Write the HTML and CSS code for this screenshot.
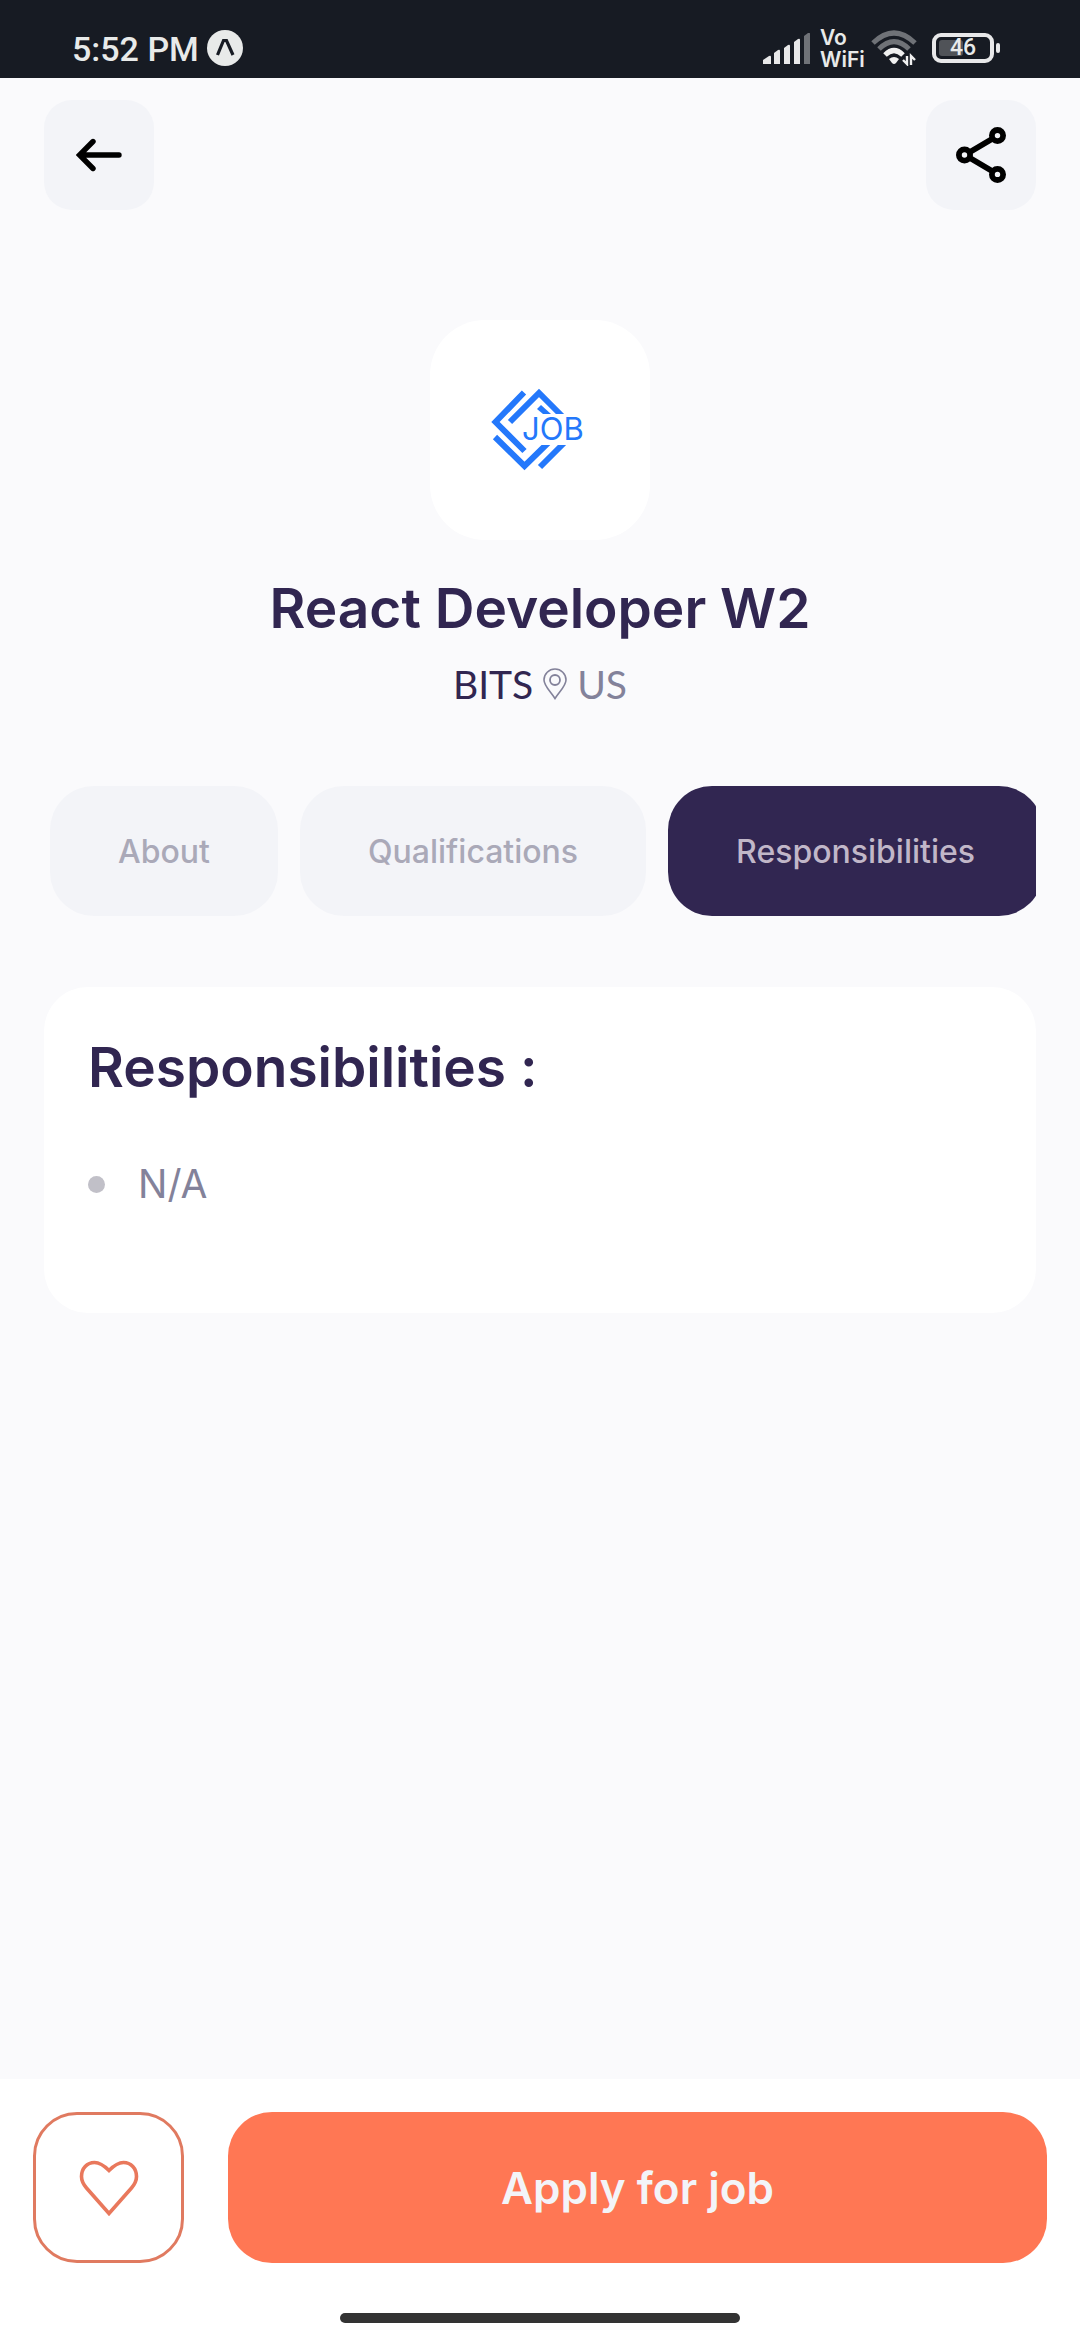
FILE: index.html
```html
<!DOCTYPE html>
<html lang="en">
<head>
<meta charset="utf-8">
<meta name="viewport" content="width=device-width, initial-scale=1">
<title>React Developer W2</title>
<link rel="stylesheet" href="styles.css">
</head>
<body>
<div class="screen">
  <div class="status-bar">
    <div class="status-left">
      <span class="clock">5:52 PM</span>
      <svg class="app-badge" viewBox="0 0 36 36" aria-hidden="true">
        <circle cx="18" cy="18" r="18" fill="#e8eae9"/>
        <path d="M10.500 25 16.500 10.500h3L26 25" fill="none" stroke="#171b23" stroke-width="3.200"/>
      </svg>
    </div>
    <div class="status-right">
      <svg class="signal" viewBox="0 0 48 31" aria-hidden="true">
        <g fill="#e8e8e9">
          <path d="M0 31v-4l6-4q2-1 2 1v7z"/>
          <path d="M11 31V20l4-3q2-1 2 1v13z"/>
          <path d="M21 31V15l4-3q2-1 2 1v18z"/>
          <path d="M31 31V9l4-3q2-1 2 1v24z"/>
        </g>
        <path d="M41 31V3l4-3q2-1 2 1v30z" fill="#6f7277"/>
      </svg>
      <div class="carrier"><span>Vo</span><span>WiFi</span></div>
      <svg class="wifi" viewBox="0 0 46 36" aria-hidden="true">
        <g fill="none" stroke-width="5">
          <path d="M2 13Q23-7 44 13" stroke="#6f7277"/>
          <path d="M8 19Q23 4 38 19" stroke="#6f7277"/>
          <path d="M14 25Q23 16 32 25" stroke="#f0f0f0"/>
        </g>
        <path d="M18 29q5-4 10 0l-3 4q-2 2-4 0z" fill="#f0f0f0"/>
        <path d="M32 30l4 4V26M44 30l-4-4v9" fill="none" stroke="#f0f0f0" stroke-width="2.400"/>
      </svg>
      <div class="battery">
        <div class="battery-body"><span class="battery-level"></span><span class="battery-text">46</span></div>
        <span class="battery-tip"></span>
      </div>
    </div>
  </div>

  <header class="top-bar">
    <button class="icon-button" type="button" aria-label="Back">
      <svg class="back-icon" viewBox="0 0 46 34" fill="none" stroke="#000" stroke-width="5.400" stroke-linecap="round" aria-hidden="true">
        <path d="M43 17H4M17 3.500 3.500 17 17 30.500"/><path d="M4 17l6-5v10z" fill="#000" stroke="none"/>
      </svg>
    </button>
    <button class="icon-button" type="button" aria-label="Share">
      <svg class="share-icon" viewBox="0 0 50 56" fill="none" stroke="#000" aria-hidden="true">
        <path d="M14 25 36 12M14 31 36 44" stroke-width="5.600"/>
        <g stroke-width="5.800"><circle cx="8.500" cy="28" r="5.600"/><circle cx="41.500" cy="8.600" r="5.600"/><circle cx="41.500" cy="47.400" r="5.600"/></g>
      </svg>
    </button>
  </header>

  <main class="content">
    <section class="company">
      <div class="logo-box">
        <svg class="logo" viewBox="0 0 98 84" role="img" aria-label="JOB">
          <g fill="none" stroke="#2478fb" stroke-width="6">
            <path d="M33 4.500 4.500 34 33.500 63"/>
            <path d="M19 34 48 5 71 28"/>
            <path d="M4 49 33.500 78 59 53"/>
            <path d="M49 79 74 54"/>
          </g>
          <path d="M46 21 50 17 60 26H52z" fill="#2478fb"/>
          <path d="M62 26H76V31H62zM46 51H76V57H46z" fill="#fff"/>
          <text class="logo-text" x="31" y="52">JOB</text>
        </svg>
      </div>
      <h1 class="job-title">React Developer W2</h1>
      <p class="company-line">
        <span class="company-name">BITS</span>
        <svg class="pin" viewBox="0 0 24 32" fill="none" stroke="#83829a" aria-hidden="true">
          <path d="M12 30.500C8 24 1 18 1 12a11 11 0 0 1 22 0c0 6-7 12-11 18.500z" stroke-width="1.600"/>
          <circle cx="12" cy="12" r="5" stroke-width="1.800"/>
        </svg>
        <span class="location">US</span>
      </p>
    </section>

    <nav class="tabs" aria-label="Job details">
      <button class="tab" type="button">About</button>
      <button class="tab" type="button">Qualifications</button>
      <button class="tab tab-active" type="button">Responsibilities</button>
    </nav>

    <section class="card">
      <h2 class="card-title">Responsibilities :</h2>
      <ul class="points"><li class="point">N/A</li></ul>
    </section>
  </main>

  <footer class="footer">
    <div class="actions">
      <button class="like-button" type="button" aria-label="Save job">
        <svg class="heart" viewBox="0 0 60 56" fill="none" stroke="#e9785c" stroke-width="3.600" aria-hidden="true">
          <path d="M30 10.500C25 5.500 20 2.500 15.500 2.500 8 2.500 2.500 8.500 2.500 16.500 2.500 21 4.500 24.500 7.500 28L30 53.500 52.500 28c3-3.500 5-7 5-11.500 0-8-5.500-14-13-14-4.500 0-9.500 3-14.500 8z"/>
        </svg>
      </button>
      <button class="apply-button" type="button">Apply for job</button>
    </div>
    <div class="home-indicator"></div>
  </footer>
</div>
</body>
</html>
```
FILE: styles.css
```css
* { box-sizing: border-box; }

body {
  margin: 0;
  background: #fafafc;
  color: #312651;
  font-family: Inter, Roboto, sans-serif;
}

button {
  border: 0;
  padding: 0;
  font: inherit;
  cursor: pointer;
}

svg { display: block; flex: none; }

.screen {
  display: flex;
  flex-direction: column;
  min-height: 100vh;
}

/* Status bar */
.status-bar {
  display: flex;
  align-items: center;
  justify-content: space-between;
  height: 78px;
  padding: 18px 80px 0 72px;
  background: #171b23;
  color: #e8eae9;
}

.status-left { display: flex; align-items: center; gap: 8px; }
.clock { padding-top: 2px; font: 500 34px/36px Roboto, sans-serif; }
.app-badge { width: 36px; height: 36px; }

.status-right { display: flex; align-items: center; gap: 9px; }
.signal { width: 48px; height: 31px; }

.carrier {
  display: flex;
  flex-direction: column;
  width: 42px;
  padding-top: 2px;
  font: 600 21px/22px Inter, sans-serif;
}

.wifi { width: 46px; height: 36px; }
.battery { display: flex; align-items: center; gap: 2px; margin-left: 6px; }

.battery-body {
  display: grid;
  align-items: center;
  width: 62px;
  height: 30px;
  padding: 2px;
  border: 4px solid #e8e8e9;
  border-radius: 9px;
}

.battery-level, .battery-text { grid-area: 1 / 1; }
.battery-level { width: 24px; height: 16px; border-radius: 3px; background: #505358; margin-left: 1px; }
.battery-text { font: 500 23px/18px Roboto, sans-serif; text-align: center; }
.battery-tip { width: 4px; height: 10px; border-radius: 2px; background: #e8e8e9; }

/* Top bar */
.top-bar {
  display: flex;
  justify-content: space-between;
  padding: 22px 44px 0;
}

.icon-button {
  display: grid;
  place-items: center;
  width: 110px;
  height: 110px;
  border-radius: 28px;
  background: #f3f4f8;
}

.back-icon { width: 46px; height: 34px; }
.share-icon { width: 50px; height: 56px; }

/* Company */
.content { flex: 1; padding: 110px 44px 44px; }

.company {
  display: flex;
  flex-direction: column;
  align-items: center;
}

.logo-box {
  display: grid;
  place-items: center;
  width: 220px;
  height: 220px;
  border-radius: 55px;
  background: #fff;
}

.logo { width: 98px; height: 84px; }
.logo-text { font: 400 31px Inter, sans-serif; fill: #2478fb; }

.job-title {
  margin: 32px 0 0;
  font-size: 55px;
  font-weight: 600;
  line-height: 72px;
}

.company-line {
  display: flex;
  align-items: center;
  gap: 10px;
  margin: 14px 0 0;
  font-family: Lato, sans-serif;
  font-size: 39px;
  line-height: 52px;
}

.pin { width: 24px; height: 32px; }
.location, .point { color: #83829a; }

/* Tabs */
.tabs {
  display: flex;
  gap: 22px;
  margin-top: 76px;
  padding-left: 6px;
  overflow: hidden;
}

.tab {
  flex: none;
  height: 130px;
  padding: 0 68px;
  border-radius: 44px;
  background: #f3f4f8;
  color: #aaa9b8;
  font-size: 32px;
  font-weight: 500;
}

.tab-active { background: #312651; color: #c1b7c8; }

/* Card */
.card {
  margin-top: 71px;
  padding: 44px 44px 103px;
  border-radius: 44px;
  background: #fff;
}

.card-title {
  margin: 0;
  font-size: 55px;
  font-weight: 600;
  line-height: 72px;
}

.points { margin: 55px 0 0; padding: 0; list-style: none; }

.point {
  display: flex;
  align-items: center;
  gap: 33px;
  font-size: 39px;
  line-height: 52px;
}

.point::before {
  content: "";
  width: 17px;
  height: 17px;
  border-radius: 50%;
  background: #c1c0c8;
}

/* Footer */
.footer { padding: 33px 33px 17px; background: #fff; }
.actions { display: flex; gap: 44px; }

.like-button {
  display: grid;
  place-items: center;
  width: 151px;
  height: 151px;
  border: 3px solid #e07a60;
  border-radius: 44px;
  background: #fff;
}

.heart { width: 60px; height: 56px; }

.apply-button {
  flex: 1;
  border-radius: 44px;
  background: #ff7754;
  color: #f3f4f8;
  font-size: 44px;
  font-weight: 600;
}

.home-indicator {
  width: 400px;
  height: 10px;
  margin: 50px auto 0;
  border-radius: 5px;
  background: #333;
}
```
